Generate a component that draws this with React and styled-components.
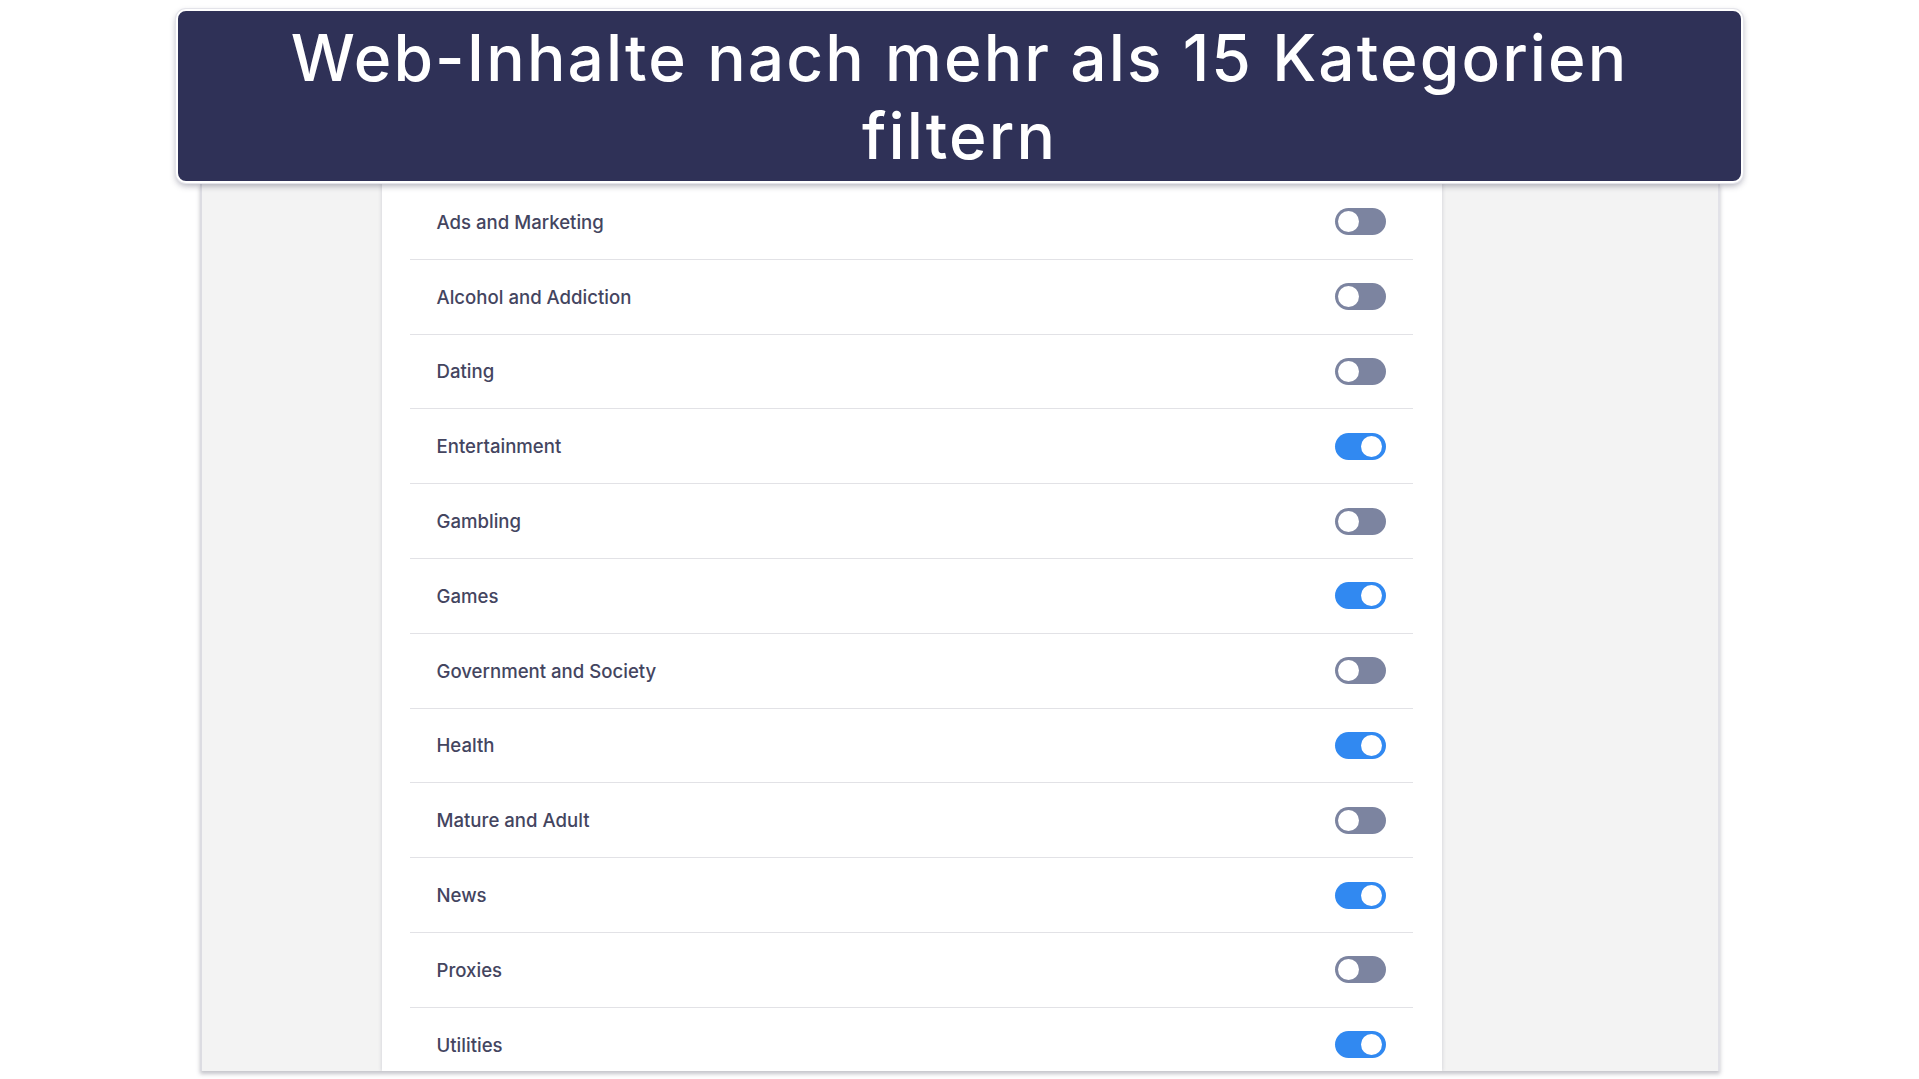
import styled, { createGlobalStyle } from "styled-components";

const GlobalStyle = createGlobalStyle`
  html, body {
    margin: 0;
    padding: 0;
    background: #ffffff;
    overflow: hidden;
  }
  body {
    font-family: "Inter", "Liberation Sans", sans-serif;
  }
`;

const Page = styled.div`
  width: 1919px;
  height: 1079px;
  display: flex;
  flex-direction: column;
  align-items: center;
`;

const Banner = styled.div`
  position: relative;
  z-index: 2;
  box-sizing: border-box;
  width: 1567px;
  height: 174px;
  margin-top: 9px;
  padding: 8px 0 0;
  background: #2f3157;
  border: 2px solid #ffffff;
  border-radius: 10px;
  box-shadow: 0 0 0 1px #e4e4ea, 0 3px 6px rgba(40, 40, 70, 0.35);
`;

const Title = styled.h1`
  margin: 0;
  color: #ffffff;
  font-family: "Inter", "Liberation Sans", sans-serif;
  font-weight: 500;
  font-size: 64px;
  line-height: 78px;
  letter-spacing: 2.1px;
  text-align: center;
`;

const Shot = styled.div`
  box-sizing: border-box;
  width: 1520px;
  height: 888px;
  display: flex;
  padding-left: 180px;
  background: #f3f3f3;
  border-left: 2px solid #dcdce2;
  border-right: 2px solid #e2e2e8;
  box-shadow: 0 3px 4px rgba(60, 60, 80, 0.3);
  overflow: hidden;
`;

const Column = styled.div`
  width: 1060px;
  flex-shrink: 0;
  background: #ffffff;
  box-shadow: 0 0 4px rgba(60, 60, 90, 0.22);
  padding: 2px 29px 0 28px;
  box-sizing: border-box;
`;

const Row = styled.div`
  height: 73.8px;
  display: flex;
  align-items: center;
  justify-content: space-between;
  padding: 0 27px;
  border-bottom: 1px solid #e2e2e6;
`;

const Label = styled.span`
  font-family: "Inter", "Liberation Sans", sans-serif;
  font-size: 18.6px;
  font-weight: 500;
  color: #44455f;
`;

const Track = styled.div`
  position: relative;
  width: 51px;
  height: 27px;
  border-radius: 14px;
  background: ${(p) => (p.$on ? "#3189f1" : "#7c84a0")};
`;

const Knob = styled.div`
  position: absolute;
  top: 3px;
  left: ${(p) => (p.$on ? "26px" : "3px")};
  width: 21px;
  height: 21px;
  border-radius: 50%;
  background: #ffffff;
`;

const categories = [
  ["Ads and Marketing", false],
  ["Alcohol and Addiction", false],
  ["Dating", false],
  ["Entertainment", true],
  ["Gambling", false],
  ["Games", true],
  ["Government and Society", false],
  ["Health", true],
  ["Mature and Adult", false],
  ["News", true],
  ["Proxies", false],
  ["Utilities", true],
];

function Toggle({ on }) {
  return (
    <Track $on={on}>
      <Knob $on={on} />
    </Track>
  );
}

export default function App() {
  return (
    <Page>
      <GlobalStyle />
      <Banner>
        <Title>
          Web-Inhalte nach mehr als 15 Kategorien
          <br />
          filtern
        </Title>
      </Banner>
      <Shot>
        <Column>
          {categories.map(([name, on]) => (
            <Row key={name}>
              <Label>{name}</Label>
              <Toggle on={on} />
            </Row>
          ))}
        </Column>
      </Shot>
    </Page>
  );
}
